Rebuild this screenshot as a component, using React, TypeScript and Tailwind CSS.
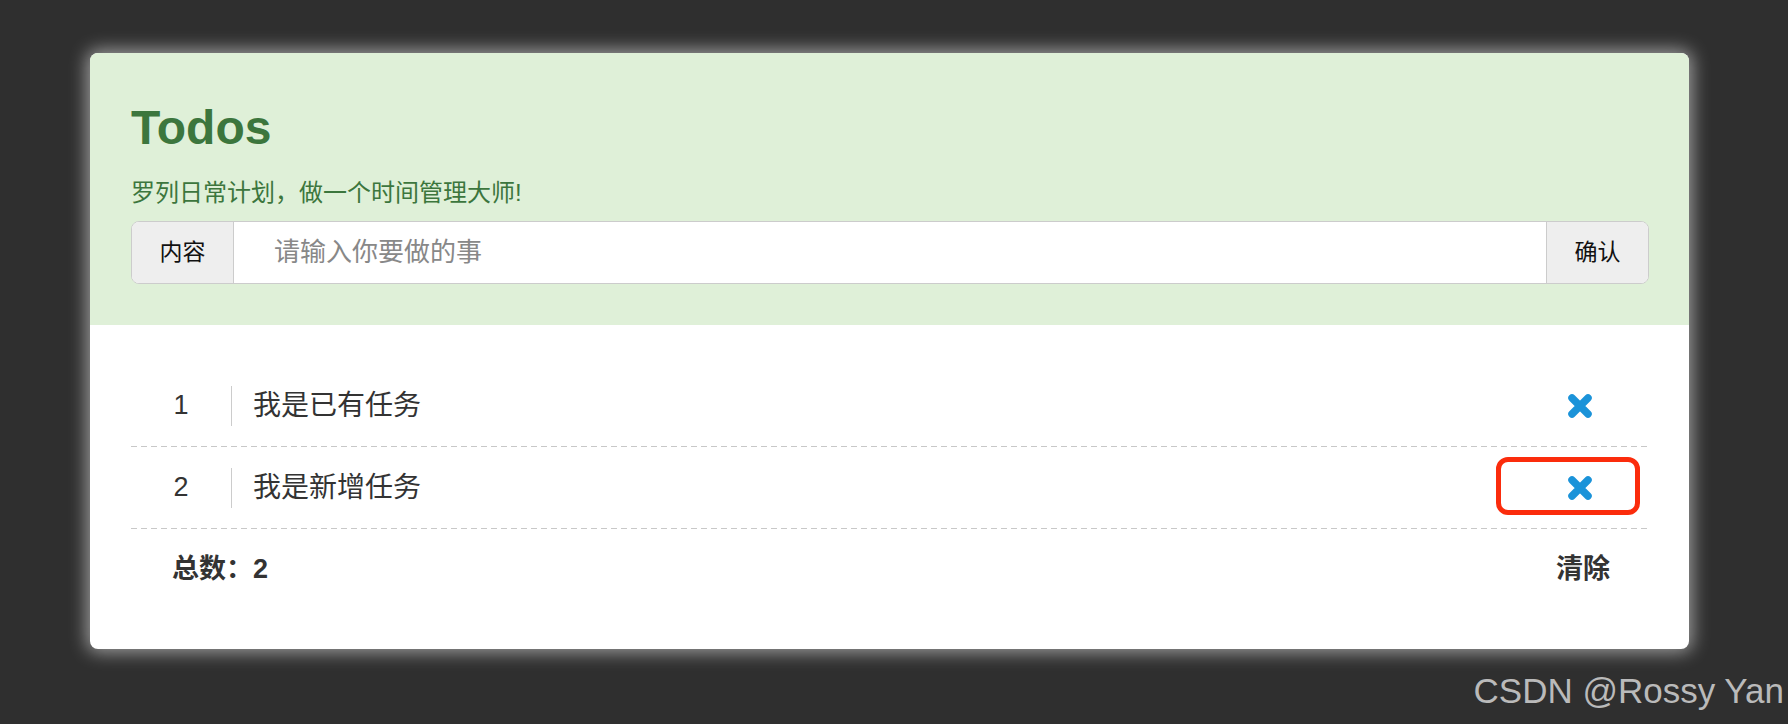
import React from "react";

function RemoveIcon() {
  return (
    <svg width="26" height="26" viewBox="0 0 26 26" aria-hidden="true">
      <path
        d="M5 5 L21 21 M21 5 L5 21"
        stroke="#1b93d9"
        strokeWidth="7.5"
        strokeLinecap="round"
        fill="none"
      />
    </svg>
  );
}

function Dashed() {
  return (
    <div className="h-px w-full bg-[repeating-linear-gradient(90deg,#c8c8c8_0px,#c8c8c8_6px,transparent_6px,transparent_10px)]" />
  );
}

function Row({ n, text, marked }: { n: number; text: string; marked?: boolean }) {
  return (
    <div>
      <div className="relative flex h-[81px] items-center">
        <div className="flex h-[40px] w-[101px] items-center justify-center border-r border-[#cccccc] text-[27px] text-[#333]">
          {n}
        </div>
        <div className="flex-1 pl-[21px] text-[28px] text-[#333]">{text}</div>
        <div className="flex w-[138px] justify-center">
          <RemoveIcon />
        </div>
        {marked && (
          <div className="pointer-events-none absolute right-[9px] top-[10px] h-[58px] w-[144px] rounded-[12px] border-[5px] border-[#fb2c0c]" />
        )}
      </div>
      <Dashed />
    </div>
  );
}

export default function App() {
  return (
    <div className="h-[724px] w-full overflow-hidden bg-[#2f2f2f] pt-[53px] font-['Liberation_Sans','Noto_Sans_CJK_SC',sans-serif]">
      <div className="ml-[90px] w-[1599px] overflow-hidden rounded-[8px] bg-white shadow-[0_0_18px_3px_rgba(255,255,255,0.55)]">
        <div className="bg-[#dff0d8] pb-[41px] pl-[41px] pr-[40px] pt-[51px]">
          <h1 className="h-[48px] text-[48px] font-bold leading-[48px] text-[#3c763d]">Todos</h1>
          <p className="mt-[25px] h-[32px] text-[24px] leading-[32px] text-[#3c763d]">
            罗列日常计划，做一个时间管理大师!
          </p>
          <div className="mt-[12px] flex h-[63px] overflow-hidden rounded-[8px] border border-[#cccccc] bg-white">
            <div className="flex w-[102px] items-center justify-center border-r border-[#cccccc] bg-[#eeeeee] text-[23px] text-[#111]">
              内容
            </div>
            <input
              className="min-w-0 flex-1 bg-white pl-[40px] text-[26px] text-[#333] outline-none placeholder:text-[#888]"
              placeholder="请输入你要做的事"
            />
            <div className="flex w-[102px] items-center justify-center border-l border-[#cccccc] bg-[#eeeeee] text-[23px] text-[#111]">
              确认
            </div>
          </div>
        </div>
        <div className="pb-[40px] pl-[41px] pr-[40px] pt-[40px]">
          <Row n={1} text="我是已有任务" />
          <Row n={2} text="我是新增任务" marked />
          <div className="flex h-[80px] items-center justify-between pl-[41px] pr-[39px] text-[27px] font-bold text-[#333]">
            <span>总数：2</span>
            <span>清除</span>
          </div>
        </div>
      </div>
      <div className="mt-[24px] flex justify-end pr-[4px]">
        <span className="text-[35px] leading-[35px] text-[#bababa]">CSDN @Rossy Yan</span>
      </div>
    </div>
  );
}
